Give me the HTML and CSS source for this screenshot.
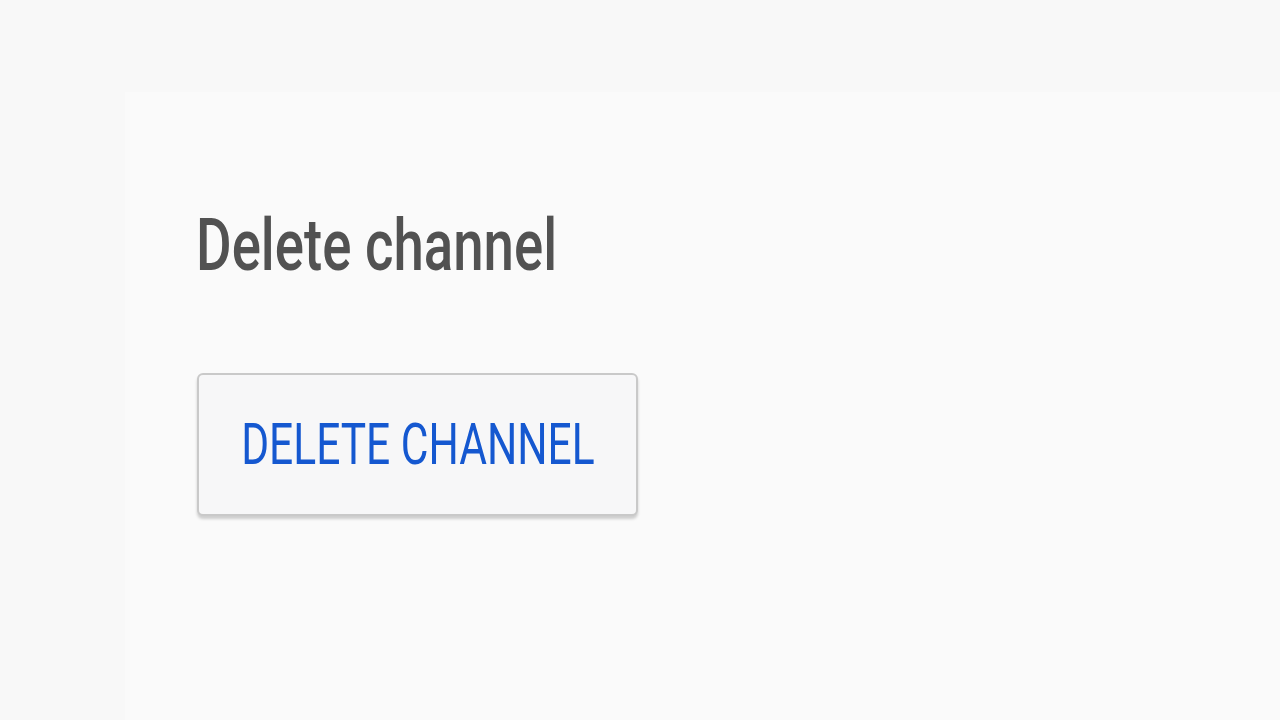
FILE: index.html
```html
<!DOCTYPE html>
<html lang="en">
<head>
<meta charset="utf-8">
<title>Delete channel</title>
<link rel="stylesheet" href="styles.css">
</head>
<body>
<div class="page">
  <main class="panel">
    <section class="danger">
      <h2 class="title"><span class="squeeze-title">Delete channel</span></h2>
      <button class="delete-btn" type="button"><span class="squeeze-btn">DELETE CHANNEL</span></button>
    </section>
  </main>
</div>
</body>
</html>
```

FILE: styles.css
```css
html, body {
  margin: 0;
  padding: 0;
  background: #f8f8f8;
  font-family: Roboto, "Noto Sans", "Liberation Sans", sans-serif;
}

.page {
  width: 1280px;
  height: 720px;
  overflow: hidden;
  padding: 92px 0 0 125px;
  box-sizing: border-box;
  display: flex;
}

.panel {
  flex: 1;
  background: #fafafa;
  padding: 0 0 0 71px;
}

.danger {
  display: flex;
  flex-direction: column;
  align-items: flex-start;
}

.title {
  margin: 118px 0 0 0;
  font-size: 72px;
  line-height: 72px;
  font-weight: 500;
  color: #525252;
  white-space: nowrap;
}

.squeeze-title {
  display: inline-block;
  transform: scaleX(0.758);
  transform-origin: left center;
}

.delete-btn {
  margin-top: 91px;
  margin-left: 1px;
  width: 441px;
  height: 143px;
  box-sizing: border-box;
  border: 2px solid #c9c9c9;
  border-radius: 6px;
  background: #f7f7f8;
  box-shadow: 0 3px 3px rgba(0, 0, 0, 0.18);
  display: flex;
  align-items: center;
  justify-content: center;
  padding: 0;
  font-family: Roboto, "Noto Sans", "Liberation Sans", sans-serif;
  font-size: 57px;
  font-weight: 400;
  color: #1558d0;
  white-space: nowrap;
}

.squeeze-btn {
  display: inline-block;
  transform: scaleX(0.746);
  transform-origin: center center;
}
```
